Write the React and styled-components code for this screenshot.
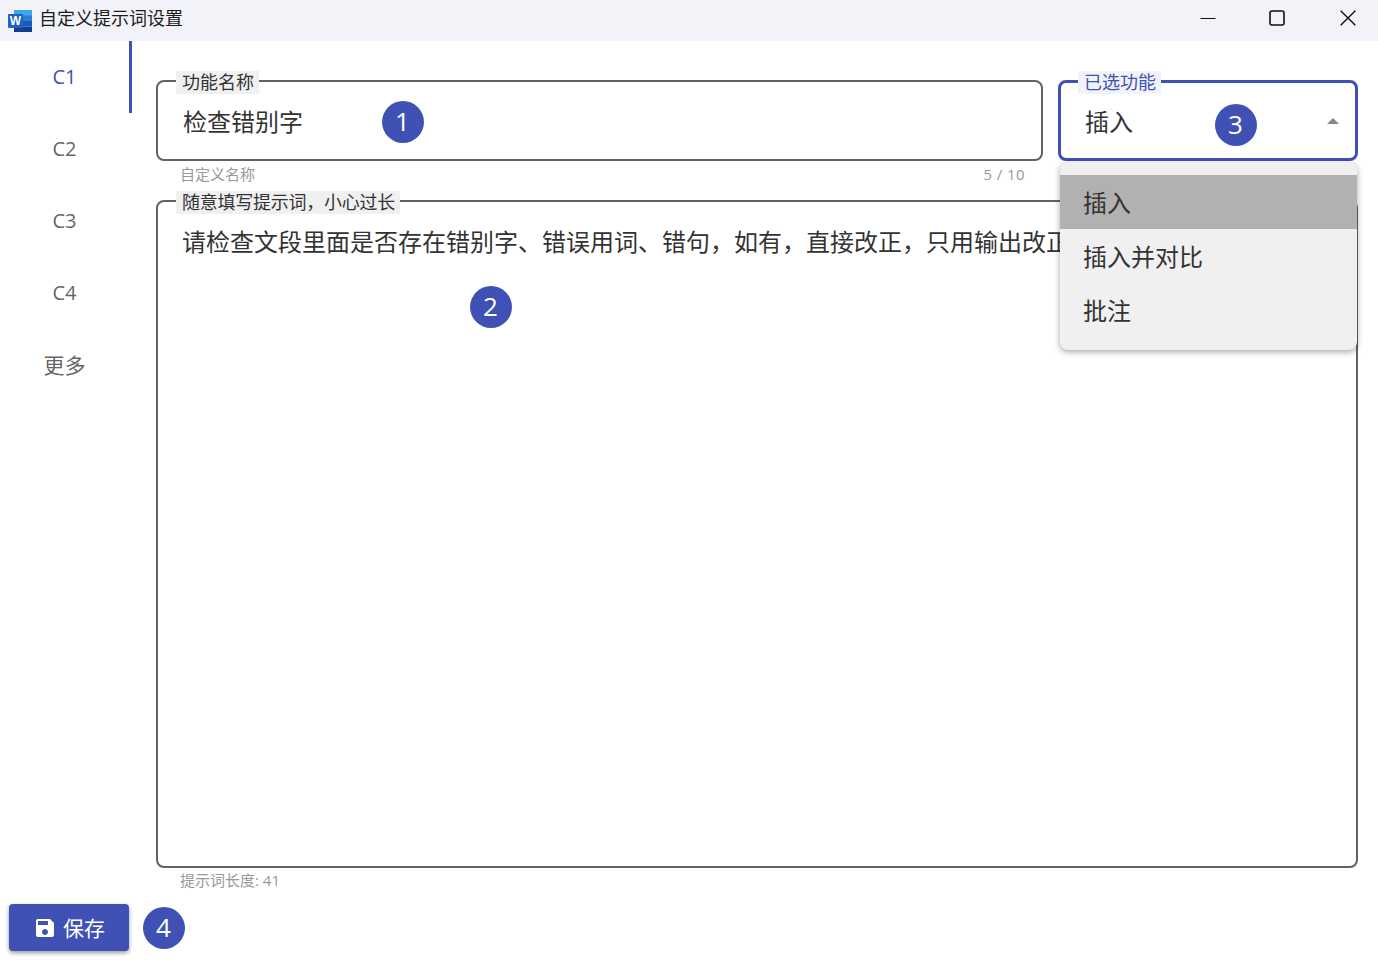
import React from "react";
import styled, { createGlobalStyle } from "styled-components";
import { MdSave } from "react-icons/md";

const INDIGO = "#3f51b5";
const PROMPT = "请检查文段里面是否存在错别字、错误用词、错句，如有，直接改正，只用输出改正后的文段";

const GlobalStyle = createGlobalStyle`
  html, body {
    margin: 0;
    padding: 0;
    background: #fff;
  }
  body {
    font-family: "Open Sans", "Noto Sans CJK SC", sans-serif;
    color: #333;
  }
  * {
    box-sizing: border-box;
  }
`;

const Window = styled.div`
  width: 1378px;
  height: 962px;
  overflow: hidden;
  display: flex;
  flex-direction: column;
`;

const TitleBar = styled.header`
  height: 41px;
  flex: none;
  background: #f1f3f9;
  display: flex;
  align-items: center;
  padding-left: 8px;
`;

const Title = styled.span`
  margin-left: 7px;
  margin-top: -6px;
  font-size: 18px;
  line-height: 24px;
  color: #1c1c1c;
`;

const WinControls = styled.div`
  margin-left: auto;
  margin-top: -5px;
  padding-right: 7.5px;
  display: flex;
  gap: 23px;
  height: 100%;
`;

const WinButton = styled.div`
  width: ${(p) => p.$w}px;
  display: flex;
  align-items: center;
  justify-content: center;
`;

const Body = styled.div`
  display: flex;
  align-items: flex-start;
`;

const Sidebar = styled.nav`
  width: 132px;
  flex: none;
  display: flex;
  flex-direction: column;
`;

const Tab = styled.div`
  height: 72px;
  padding-bottom: 2px;
  display: flex;
  align-items: center;
  justify-content: center;
  font-size: ${(p) => (p.$cjk ? "21px" : "20px")};
  color: ${(p) => (p.$active ? INDIGO : "#666")};
  border-right: 3px solid ${(p) => (p.$active ? INDIGO : "transparent")};
`;

const Main = styled.main`
  position: relative;
  flex: 1;
  padding: 39px 20px 0 24px;
`;

const TopRow = styled.div`
  display: flex;
  gap: 15px;
`;

const NameColumn = styled.div`
  flex: 1;
`;

const SelectColumn = styled.div`
  position: relative;
  width: 300px;
  flex: none;
`;

const Outline = styled.div`
  position: relative;
  height: ${(p) => p.$height}px;
  border: ${(p) => (p.$focused ? `3px solid ${INDIGO}` : "2px solid #626262")};
  border-radius: 8px;
  padding: ${(p) => (p.$focused ? "23px 24px 0 24px" : "24px 24px 0 25px")};
  font-size: 24px;
  line-height: 32px;
  color: #333;
  white-space: nowrap;
`;

const PromptBox = styled(Outline)`
  padding: 24px 24px 0 24px;
`;

const FloatLabel = styled.label`
  position: absolute;
  top: ${(p) => (p.$focused ? "-12px" : "-11px")};
  left: ${(p) => (p.$focused ? "17px" : "18px")};
  height: 23px;
  padding: 0 5px 0 6px;
  font-size: 18px;
  line-height: 23px;
  letter-spacing: ${(p) => (p.$tight ? "-0.25px" : "0")};
  background: ${(p) => (p.$focused ? "#f2f3f7" : "#f0f0f0")};
  color: ${(p) => (p.$focused ? INDIGO : "#333")};
`;

const Arrow = styled.svg`
  position: absolute;
  right: 16px;
  top: 35px;
`;

const HelperRow = styled.div`
  height: 39px;
  padding: 5px 18px 0 24px;
  display: flex;
  justify-content: space-between;
  font-size: 15px;
  line-height: 17px;
  color: #999;
`;

const BottomHelper = styled(HelperRow)`
  height: auto;
  padding-top: 4px;
`;

const Counter = styled.span`
  letter-spacing: 0.4px;
`;

const Menu = styled.ul`
  position: absolute;
  top: 82px;
  left: 2px;
  width: 297px;
  height: 188px;
  margin: 0;
  padding: 13px 0 0;
  list-style: none;
  background: #f0f0f0;
  border-radius: 8px;
  box-shadow: 0 2px 6px rgba(0, 0, 0, 0.35);
  z-index: 2;
`;

const MenuItem = styled.li`
  height: 54.4px;
  padding: 0 0 2px 23px;
  display: flex;
  align-items: center;
  font-size: 24px;
  color: #333;
  background: ${(p) => (p.$selected ? "#b1b1b1" : "transparent")};
`;

const Badge = styled.span`
  width: 42px;
  height: 42px;
  flex: none;
  padding: 0 1px 2px 0;
  border-radius: 50%;
  background: ${INDIGO};
  color: #fff;
  font-family: "Open Sans", sans-serif;
  font-size: 26px;
  display: flex;
  align-items: center;
  justify-content: center;
`;

const FloatBadge = styled(Badge)`
  position: absolute;
  left: ${(p) => p.$x}px;
  top: ${(p) => p.$y}px;
  z-index: 3;
`;

const Footer = styled.footer`
  display: flex;
  align-items: center;
  gap: 14px;
  padding: 15px 0 0 9px;
`;

const SaveButton = styled.button`
  width: 120px;
  height: 47px;
  border: none;
  border-radius: 4px;
  background: ${INDIGO};
  color: #fff;
  font-family: inherit;
  font-size: 21px;
  display: flex;
  align-items: center;
  justify-content: center;
  gap: 6px;
  box-shadow: 0 2px 4px rgba(0, 0, 0, 0.4);
`;

const SaveLabel = styled.span`
  margin-top: -2px;
`;

function WordIcon() {
  return (
    <svg width="24" height="22" viewBox="0 0 24 22">
      <rect x="6" width="18" height="6" fill="#41a5ee" />
      <rect x="6" y="5.5" width="18" height="5.5" fill="#2b7cd3" />
      <rect x="6" y="11" width="18" height="5.5" fill="#185abd" />
      <rect x="6" y="16.5" width="18" height="5.5" fill="#103f91" />
      <rect y="4" width="15" height="14" rx="1" fill="#1f62c4" />
      <text x="7.5" y="15" textAnchor="middle" fontFamily="Liberation Sans" fontWeight="700" fontSize="12" fill="#fff">
        W
      </text>
    </svg>
  );
}

export default function App() {
  return (
    <Window>
      <GlobalStyle />
      <TitleBar>
        <WordIcon />
        <Title>自定义提示词设置</Title>
        <WinControls>
          <WinButton $w={42}>
            <svg width="16" height="16" viewBox="0 0 16 16">
              <path d="M0.5 8.5h15" stroke="#111" strokeWidth="1" />
            </svg>
          </WinButton>
          <WinButton $w={50}>
            <svg width="16" height="16" viewBox="0 0 16 16">
              <rect x="1" y="1" width="14" height="14" rx="2" fill="none" stroke="#111" strokeWidth="1.6" />
            </svg>
          </WinButton>
          <WinButton $w={46}>
            <svg width="16" height="16" viewBox="0 0 16 16">
              <path d="M0.7 0.7l14.6 14.6M15.3 0.7L0.7 15.3" stroke="#111" strokeWidth="1.4" />
            </svg>
          </WinButton>
        </WinControls>
      </TitleBar>

      <Body>
        <Sidebar>
          <Tab $active>C1</Tab>
          <Tab>C2</Tab>
          <Tab>C3</Tab>
          <Tab>C4</Tab>
          <Tab $cjk>更多</Tab>
        </Sidebar>

        <Main>
          <TopRow>
            <NameColumn>
              <Outline $height={81}>
                <FloatLabel>功能名称</FloatLabel>
                检查错别字
              </Outline>
              <HelperRow>
                <span>自定义名称</span>
                <Counter>5 / 10</Counter>
              </HelperRow>
            </NameColumn>
            <SelectColumn>
              <Outline $height={81} $focused>
                <FloatLabel $focused>已选功能</FloatLabel>
                插入
                <Arrow width="12" height="6" viewBox="0 0 12 6">
                  <path d="M0 6L6 0l6 6z" fill="#888" />
                </Arrow>
              </Outline>
              <Menu>
                <MenuItem $selected>插入</MenuItem>
                <MenuItem>插入并对比</MenuItem>
                <MenuItem>批注</MenuItem>
              </Menu>
            </SelectColumn>
          </TopRow>

          <PromptBox $height={668}>
            <FloatLabel $tight>随意填写提示词，小心过长</FloatLabel>
            {PROMPT}
          </PromptBox>
          <BottomHelper>
            <span>提示词长度: 41</span>
          </BottomHelper>

          <FloatBadge $x={250} $y={60}>1</FloatBadge>
          <FloatBadge $x={338} $y={245}>2</FloatBadge>
          <FloatBadge $x={1083} $y={63}>3</FloatBadge>
        </Main>
      </Body>

      <Footer>
        <SaveButton>
          <MdSave size={24} />
          <SaveLabel>保存</SaveLabel>
        </SaveButton>
        <Badge>4</Badge>
      </Footer>
    </Window>
  );
}
